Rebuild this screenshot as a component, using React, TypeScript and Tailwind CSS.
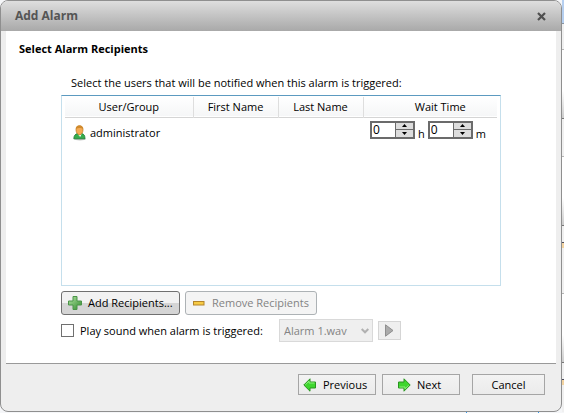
import type { ReactNode } from 'react'

function UserIcon() {
  return (
    <svg width="13" height="16" viewBox="0 0 13 16" aria-hidden="true">
      <ellipse cx="7" cy="14" rx="6" ry="1.500" fill="#00000038" />
      <path d="M.8 13.800C.8 10.500 2.500 9 4.500 8.500h4c2.500.5 3.500 2 3.500 5.300z" fill="#36ad4c" stroke="#1d7a35" strokeWidth=".8" />
      <path d="M4.800 9.300h3.700L7.200 12z" fill="#fff" />
      <path d="M3 4.500C3 2 4.300.8 6.500.8S10 2 10 4.500c0 2.800-1.500 5.300-3.500 5.300S3 7.300 3 4.500z" fill="#f5ab55" stroke="#c07d28" strokeWidth=".8" />
      <path d="M3 4C2.800 1.600 4.300.5 6.500.5S10.300 1.800 10 4C8.500 3 5 2.600 3 4z" fill="#d08a2c" />
    </svg>
  )
}

function PlusIcon() {
  return (
    <svg width="14" height="14" viewBox="0 0 14 14" aria-hidden="true">
      <defs>
        <linearGradient id="plus" x1="0" y1="0" x2="1" y2="1">
          <stop offset="0" stopColor="#b5e6a5" />
          <stop offset="1" stopColor="#2f8a2c" />
        </linearGradient>
      </defs>
      <path d="M5 .5h4V5h4.500v4H9v4.500H5V9H.5V5H5z" fill="url(#plus)" stroke="#4b9448" strokeLinejoin="round" />
    </svg>
  )
}

function MinusIcon() {
  return (
    <svg width="12" height="5" viewBox="0 0 12 5" aria-hidden="true">
      <rect x=".5" y=".5" width="10.500" height="3.500" fill="#f7cb45" stroke="#b3842a" />
    </svg>
  )
}

function ArrowIcon({ className }: { className?: string }) {
  return (
    <svg width="14" height="14" viewBox="0 0 14 14" className={className} aria-hidden="true">
      <path d="M.8 7L7 .8V4h5.500v6H7v3.200z" fill="#3fd62f" stroke="#2a9420" strokeLinejoin="round" />
      <path d="M2.500 6.700L6 3v2h5.500" fill="none" stroke="#8cf07c" />
    </svg>
  )
}

function Spinner({ label }: { label: string }) {
  return (
    <span className="flex h-[18px] w-[45px] border-2 border-[#6b6b6b] bg-white">
      <input
        aria-label={label}
        defaultValue="0"
        className="w-0 min-w-0 flex-1 pl-px text-[12px] leading-[14px] outline-none"
      />
      <span className="flex w-[18px] flex-col gap-px border-l border-[#6b6b6b] bg-[#6b6b6b]">
        <button type="button" aria-label={`Increase ${label}`} className="flex flex-1 items-center justify-center bg-[#dddddd]">
          <svg width="5" height="3" viewBox="0 0 5 3" aria-hidden="true">
            <path d="M2.500 0L5 3H0z" />
          </svg>
        </button>
        <button type="button" aria-label={`Decrease ${label}`} className="flex flex-1 items-center justify-center bg-[#dddddd]">
          <svg width="5" height="3" viewBox="0 0 5 3" aria-hidden="true">
            <path d="M0 0h5L2.500 3z" />
          </svg>
        </button>
      </span>
    </span>
  )
}

function FooterButton({ className, children }: { className: string; children: ReactNode }) {
  return (
    <button
      type="button"
      className={`flex h-[21px] items-center border border-[#a5a5a5] bg-linear-to-b from-[#f3f3f3] to-[#ebebeb] ${className}`}
    >
      {children}
    </button>
  )
}

// Edge of the window behind the dialog
function BackdropEdge() {
  return (
    <div className="flex w-[2px] shrink-0 flex-col bg-[#f0f0f0]" aria-hidden="true">
      <div className="h-6 border-b border-[#8a94a0] bg-[#b5cff0]" />
      <div className="h-[26px] border-b border-[#b5b5b5]" />
      <div className="h-[69px] border-b border-[#777777] bg-linear-to-b from-white from-60% to-[#cccccc]" />
      <div className="h-[38px] border-b border-[#b5b5b5]" />
      <div className="h-[69px] border-b border-[#777777] bg-linear-to-b from-white from-60% to-[#cccccc]" />
      <div className="h-[17px] border-b border-[#4a4a5a]" />
      <div className="h-[5px] bg-[#f3d3a0]" />
      <div className="h-[46px] border-b border-[#b5b5b5]" />
      <div className="h-[69px] border-b border-[#777777] bg-linear-to-b from-white from-60% to-[#cccccc]" />
      <div className="h-[17px] border-b border-[#4a4a5a]" />
      <div className="h-[5px] bg-[#f3d3a0]" />
    </div>
  )
}

export default function App() {
  return (
    <div className="flex h-screen min-h-[400px] flex-col bg-[#f5f6f8] font-['Open_Sans','Segoe_UI',sans-serif] text-[11px] leading-4 text-black">
      <div className="flex min-h-0 flex-1">
        <div
          role="dialog"
          aria-labelledby="title"
          className="flex min-w-0 flex-1 flex-col overflow-hidden rounded-lg border border-[#8f8f8f] bg-[#eeeeee]"
        >
          <header className="flex h-[30px] shrink-0 items-center justify-between bg-linear-to-b from-[#dedede] to-[#a9a9a9] pr-[15px] pl-[14px]">
            <h1 id="title" className="text-[12px] font-bold text-[#555555]">Add Alarm</h1>
            <button type="button" aria-label="Close">
              <svg width="9" height="9" viewBox="0 0 9 9" stroke="#505050" strokeWidth="2.200" aria-hidden="true">
                <path d="M1 1l7 7M8 1L1 8" />
              </svg>
            </button>
          </header>

          <main className="mx-[5px] flex min-h-0 flex-1 flex-col border-b border-[#999999] bg-white pr-[55px] pb-[21px] pl-[55px]">
            <h2 className="-ml-[42px] pt-[10px] font-bold">Select Alarm Recipients</h2>
            <p className="pt-[18px] pb-1 pl-[10px] whitespace-nowrap">
              Select the users that will be notified when this alarm is triggered:
            </p>

            <div className="min-h-0 flex-1 border border-[#c5dfec] border-t-[#5c9ac0] px-[3px] pt-px">
              <table className="w-full table-fixed border-collapse">
                <thead>
                  <tr className="h-5 border-b border-[#d5d5d5] bg-linear-to-b from-white to-[#f5f6f7]">
                    <th className="w-[128px] border-r border-[#dedede] font-normal">User/Group</th>
                    <th className="w-[85px] border-r border-[#dedede] font-normal">First Name</th>
                    <th className="w-[85px] border-r border-[#dedede] font-normal">Last Name</th>
                    <th className="pl-5 font-normal">Wait Time</th>
                  </tr>
                </thead>
                <tbody>
                  <tr>
                    <td className="pt-[3px]">
                      <span className="flex items-center gap-1 pt-1 pl-2">
                        <UserIcon />
                        administrator
                      </span>
                    </td>
                    <td />
                    <td />
                    <td className="pt-[3px] align-top">
                      <span className="flex items-end gap-[3px] pl-[7px]">
                        <Spinner label="hours" />
                        <span className="-mb-[3px]">h</span>
                        <Spinner label="minutes" />
                        <span className="-mb-[3px]">m</span>
                      </span>
                    </td>
                  </tr>
                </tbody>
              </table>
            </div>

            <div className="flex gap-[5px] pt-[5px]">
              <button
                type="button"
                className="flex h-6 w-[119px] items-center gap-[6px] rounded-[3px] border border-[#707070] bg-linear-to-b from-[#f2f2f2] from-50% to-[#d5d5d5] to-50% pl-[6px] whitespace-nowrap"
              >
                <PlusIcon />
                Add Recipients...
              </button>
              <button
                type="button"
                disabled
                className="flex h-6 w-[132px] items-center gap-[7px] rounded-[3px] border border-[#adb2b5] bg-[#f4f4f4] pl-[7px] whitespace-nowrap text-[#838383]"
              >
                <MinusIcon />
                Remove Recipients
              </button>
            </div>

            <div className="flex items-center pt-1">
              <label className="flex items-center gap-[6px] whitespace-nowrap">
                <input type="checkbox" className="size-[13px] appearance-none border border-[#707070] bg-white checked:bg-[#707070]" />
                Play sound when alarm is triggered:
              </label>
              <span className="relative ml-auto flex items-center">
                <select
                  aria-label="Alarm sound"
                  disabled
                  className="h-[23px] w-[94px] appearance-none border border-[#d9d9d9] bg-[#efefef] pl-1 text-[#838383] opacity-100"
                >
                  <option>Alarm 1.wav</option>
                </select>
                <svg width="8" height="6" viewBox="0 0 8 6" className="pointer-events-none absolute right-1" fill="none" stroke="#b0b0b0" strokeWidth="2" aria-hidden="true">
                  <path d="M.7 1L4 4.300 7.300 1" />
                </svg>
              </span>
              <button
                type="button"
                disabled
                aria-label="Play"
                className="mr-[100px] ml-[5px] flex h-[19px] w-[23px] items-center justify-center border border-[#d5d5d5] bg-[#efefef]"
              >
                <svg width="9" height="13" viewBox="0 0 9 13" aria-hidden="true">
                  <path d="M.5 .8L8 6.500.5 12.200z" fill="#ababab" stroke="#8f8f8f" />
                </svg>
              </button>
            </div>
          </main>

          <footer className="flex h-[47px] shrink-0 items-start justify-end gap-[6px] pt-[10px] pr-4">
            <FooterButton className="w-[78px] gap-[6px] pl-1">
              <ArrowIcon />
              Previous
            </FooterButton>
            <FooterButton className="w-[78px] gap-[6px] pl-[14px]">
              <ArrowIcon className="rotate-180" />
              Next
            </FooterButton>
            <FooterButton className="ml-[6px] w-[73px] justify-center">Cancel</FooterButton>
          </footer>
        </div>
        <BackdropEdge />
      </div>
      <div className="flex h-px shrink-0 justify-end pr-[25px]" aria-hidden="true">
        <div className="w-[73px] border-x border-[#3399ee]" />
      </div>
    </div>
  )
}
